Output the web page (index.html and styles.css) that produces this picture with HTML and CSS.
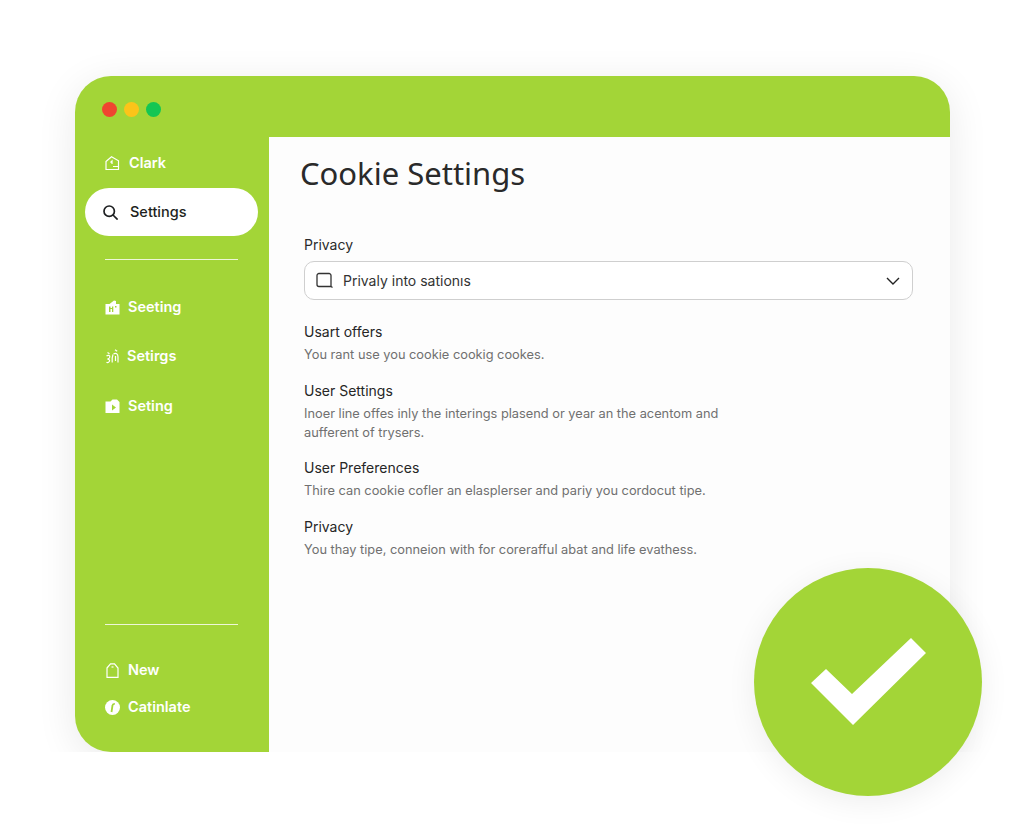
FILE: index.html
```html
<!DOCTYPE html>
<html lang="en">
<head>
  <meta charset="UTF-8">
  <title>Cookie Settings</title>
  <link rel="stylesheet" href="styles.css">
</head>
<body>
  <div class="window">
    <div class="titlebar">
      <span class="dot dot-red"></span>
      <span class="dot dot-yellow"></span>
      <span class="dot dot-green"></span>
    </div>

    <div class="window-body">
      <nav class="sidebar">
        <a class="nav-item nav-top">
          <svg class="nav-icon" viewBox="0 0 15 15" fill="none" stroke="currentColor" stroke-width="1.2"><path d="M1 5.500 6.500.8l7 4v8.700H1z"/><path d="M5.500 6.500 7 5v3M8 10.500h5.500"/></svg>
          Clark
        </a>
        <a class="nav-item nav-active">
          <svg class="nav-icon" viewBox="0 0 15 15" fill="none" stroke="currentColor" stroke-width="1.700"><circle cx="6.200" cy="6.200" r="5.200"/><path d="m10 10 4.600 4.600"/></svg>
          Settings
        </a>
        <hr class="divider">
        <a class="nav-item nav-first">
          <svg class="nav-icon" viewBox="0 0 15 15"><path fill="currentColor" fill-rule="evenodd" d="M.5 4h4L9 .5l2 .5v3h3.500v10.500H.5zM4 6.500V12h1.500V9H7v3h1.300V6.500H7V8H5.500V6.500zM10 6v1.500h1.500V6z"/></svg>
          Seeting
        </a>
        <a class="nav-item nav-gap-a">
          <svg class="nav-icon" viewBox="0 0 15 15" fill="none" stroke="currentColor" stroke-width="1.200"><path d="M1.500 7C3 5.800 5 6.300 4.800 8S3 10 2.500 10.200c1.500 0 2.800 1 1.800 2.300S2 13.800 1.500 13M2.500 3.500l2 1.200M8 5.500c-1 2.500-1 5.500-.8 8M8.500 5C11 3.500 13 5 13 8v5.500M10 .8l2.200 1.400M10.500 7v5"/></svg>
          Setirgs
        </a>
        <a class="nav-item nav-gap-b">
          <svg class="nav-icon" viewBox="0 0 15 15"><path fill="currentColor" fill-rule="evenodd" d="M.5 2.500h5L7.500.5H12l2.500 2.500v11h-14zM7 5.500v6l4-3z"/></svg>
          Seting
        </a>

        <div class="sidebar-bottom">
          <hr class="divider">
          <a class="nav-item nav-new">
            <svg class="nav-icon" viewBox="0 0 15 15" fill="none" stroke="currentColor" stroke-width="1.200"><path d="M2 5 5.500.8h4L13 5v9.400H2z"/><path d="M6.500 4h2"/></svg>
            New
          </a>
          <a class="nav-item nav-last">
            <svg class="nav-icon" viewBox="0 0 15 15"><circle cx="7.500" cy="7.500" r="7.500" fill="currentColor"/><path d="M6.500 12 7.500 5.500c.1-1 .8-1.800 2.300-1.700" fill="none" stroke="#a3d537" stroke-width="1.800"/></svg>
            Catinlate
          </a>
        </div>
      </nav>

      <main class="content">
        <h1>Cookie Settings</h1>

        <label class="field-label">Privacy</label>
        <div class="select">
          <svg class="select-icon" viewBox="0 0 18 18" fill="none" stroke="currentColor" stroke-width="1.300"><path d="M15 14.500V3.500a2 2 0 0 0-2-2H3a2 2 0 0 0-2 2v9a2 2 0 0 0 2 2h12l1.500 1"/></svg>
          <span>Privaly into sationıs</span>
          <svg class="chevron" viewBox="0 0 14 8" fill="none" stroke="currentColor" stroke-width="1.400"><path d="m1 1 6 6 6-6"/></svg>
        </div>

        <section class="option">
          <h3>Usart offers</h3>
          <p>You rant use you cookie cookig cookes.</p>
        </section>
        <section class="option">
          <h3>User Settings</h3>
          <p>Inoer line offes inly the interings plasend or year an the acentom and aufferent of trysers.</p>
        </section>
        <section class="option">
          <h3>User Preferences</h3>
          <p>Thire can cookie cofler an elasplerser and pariy you cordocut tipe.</p>
        </section>
        <section class="option">
          <h3>Privacy</h3>
          <p>You thay tipe, conneion with for corerafful abat and life evathess.</p>
        </section>
      </main>
    </div>
  </div>

  <div class="badge">
    <svg viewBox="0 0 228 228"><polygon fill="#fff" points="57,115 72,101 98,126 157,70 172,85 99,157"/></svg>
  </div>
</body>
</html>
```

FILE: styles.css
```css
body {
  margin: 0;
  background: #fff;
  font-family: "Inter", "Liberation Sans", sans-serif;
}

.window {
  width: 875px;
  height: 676px;
  margin: 76px 0 0 75px;
  display: flex;
  flex-direction: column;
  background: #a3d537;
  border-radius: 36px 36px 0 36px;
  box-shadow: 0 8px 40px rgba(0, 0, 0, 0.09);
}

.titlebar {
  height: 61px;
  flex: none;
  box-sizing: border-box;
  padding: 26px 0 0 27px;
  display: flex;
  align-items: flex-start;
  gap: 7px;
}

.dot {
  width: 15px;
  height: 15px;
  border-radius: 50%;
}
.dot-red { background: #ef4630; }
.dot-yellow { background: #fcc419; }
.dot-green { background: #14c653; }

.window-body {
  flex: 1;
  display: flex;
  min-height: 0;
}

/* sidebar */
.sidebar {
  width: 194px;
  flex: none;
  box-sizing: border-box;
  padding: 0 11px 0 10px;
  display: flex;
  flex-direction: column;
}

.nav-item {
  display: flex;
  align-items: center;
  gap: 8px;
  height: 20px;
  padding-left: 20px;
  color: #fff;
  font-size: 14.5px;
  font-weight: 600;
  line-height: 20px;
}

.nav-icon {
  width: 15px;
  height: 15px;
  flex: none;
}

.nav-top { margin-top: 16px; gap: 9px; }

.nav-active {
  height: 48px;
  margin-top: 15px;
  padding-left: 18px;
  gap: 12px;
  background: #fff;
  border-radius: 24px;
  color: #1d1f21;
  font-weight: 500;
}

.divider {
  height: 1px;
  margin: 23px 20px 0 20px;
  border: none;
  background: rgba(255, 255, 255, 0.8);
}

.nav-first { margin-top: 37px; }
.nav-gap-a { margin-top: 29px; gap: 7px; }
.nav-gap-b { margin-top: 30px; }

.sidebar-bottom {
  margin-top: auto;
  padding-bottom: 35px;
}

.sidebar-bottom .divider { margin-top: 0; }

.nav-new { margin-top: 35px; }
.nav-last { margin-top: 17px; }

/* main panel */
.content {
  flex: 1;
  box-sizing: border-box;
  padding: 14px 37px 0 35px;
  background: #fdfdfd;
}

h1 {
  margin: 0 0 40px -4px;
  color: #2a2a2a;
  font-family: "Noto Sans", sans-serif;
  font-size: 31px;
  font-weight: 400;
  line-height: 44px;
}

.field-label {
  display: block;
  color: #2b2b2b;
  font-size: 14px;
  line-height: 20px;
}

.select {
  display: flex;
  align-items: center;
  height: 39px;
  box-sizing: border-box;
  margin-top: 6px;
  padding: 0 12px 0 11px;
  border: 1px solid #cfcfcf;
  border-radius: 10px;
  background: #fff;
  color: #333;
  font-size: 14px;
}

.select-icon {
  width: 18px;
  height: 18px;
  margin-right: 9px;
  flex: none;
}

.chevron {
  width: 14px;
  height: 8px;
  margin-left: auto;
  color: #222;
}

.option { margin-top: 16.5px; }
.select + .option { margin-top: 22px; }

.option h3 {
  margin: 0;
  color: #262626;
  font-size: 14px;
  font-weight: 400;
  line-height: 20px;
}

.option p {
  width: 425px;
  margin: 3px 0 0;
  color: #707070;
  font-size: 12.8px;
  line-height: 19px;
}

/* confirmation badge over the window corner */
.badge {
  position: absolute;
  left: 754px;
  top: 568px;
  width: 228px;
  height: 228px;
  border-radius: 50%;
  background: #a3d537;
  box-shadow: 0 6px 30px rgba(0, 0, 0, 0.07);
}

.badge svg {
  display: block;
  width: 228px;
  height: 228px;
}
```
